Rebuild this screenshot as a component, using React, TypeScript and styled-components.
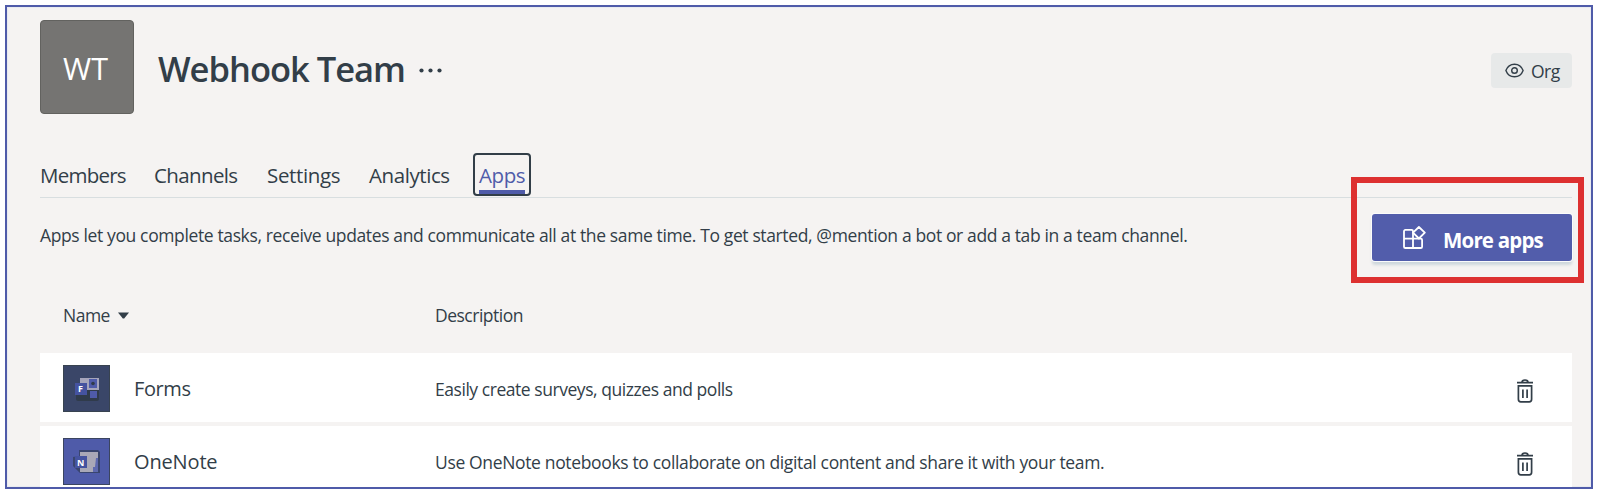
import React from 'react';
import styled, { createGlobalStyle } from 'styled-components';

const ink = '#323e48';
const indigo = '#4f5ba9';

const GlobalStyle = createGlobalStyle`
  * { box-sizing: border-box; }
  body {
    margin: 0;
    background: #fff;
    color: ${ink};
    font-family: 'Open Sans', 'Noto Sans', sans-serif;
  }
  button { font: inherit; color: inherit; border: 0; padding: 0; background: none; }
  svg { display: block; flex: none; }
`;

const Page = styled.div`
  height: 495px;
  padding: 5px 6px 6px 5px;
`;

const Frame = styled.main`
  display: flex;
  flex-direction: column;
  height: 484px;
  overflow: hidden;
  border: 2px solid ${indigo};
  background: #f5f3f2;
  box-shadow: inset 0 0 0 1px #e9ebf0;
  padding: 13px 19px 0 33px;
`;

const Header = styled.header`
  display: flex;
  align-items: flex-start;
  height: 133px;
  flex: none;
`;

const Avatar = styled.div`
  width: 94px;
  height: 94px;
  padding-right: 3px;
  border: 1px solid #62625f;
  border-radius: 4px;
  background: #757472;
  color: #fff;
  font-size: 30.5px;
  line-height: 94px;
  text-align: center;
`;

const Title = styled.h1`
  margin: 27px 0 0 24px;
  font-size: 34.5px;
  font-weight: 600;
  line-height: 44px;
  letter-spacing: -1px;
  white-space: nowrap;
`;

const MoreMenu = styled.button`
  margin: 48px 0 0 14px;
`;

const Visibility = styled.div`
  display: flex;
  align-items: center;
  gap: 7px;
  width: 81px;
  height: 35px;
  margin: 33px 0 0 auto;
  padding-left: 14px;
  border-radius: 4px;
  background: #e7e9e9;
  font-size: 17.5px;
  letter-spacing: -0.5px;
`;

const Tabs = styled.nav`
  display: flex;
  height: 45px;
  flex: none;
  border-bottom: 1px solid #d8dee0;
`;

const Tab = styled.button<{ $span: number; $track: number }>`
  width: ${p => p.$span}px;
  height: 44px;
  text-align: left;
  white-space: nowrap;
  font-size: 20.5px;
  line-height: 42px;
  letter-spacing: ${p => p.$track}px;
`;

const ActiveTab = styled.button`
  width: 58px;
  height: 43px;
  border: 2px solid ${ink};
  border-radius: 4px;
  padding: 0 4px;
  color: ${indigo};
  font-size: 20.5px;
  line-height: 40px;
  letter-spacing: -0.4px;
`;

const ActiveLabel = styled.span`
  display: block;
  height: 39px;
  border-bottom: 4px solid ${indigo};
  white-space: nowrap;
`;

const Intro = styled.section`
  display: flex;
  justify-content: space-between;
  height: 93px;
  flex: none;
`;

const IntroText = styled.p`
  margin: 24px 0 0;
  font-size: 17.5px;
  line-height: 26px;
  letter-spacing: -0.373px;
  white-space: nowrap;
`;

const Callout = styled.div`
  position: relative;
  width: 233px;
  height: 106px;
  margin: -21px -12px 0 0;
  padding: 31px 6px 0 15px;
  border: 6px solid #dd3030;
`;

const PrimaryButton = styled.button`
  display: flex;
  align-items: center;
  width: 200px;
  height: 47px;
  padding-left: 30px;
  gap: 17px;
  border-radius: 3px;
  background: #525dab;
  box-shadow: 0 0 0 1px #fbfbfb, 0 4px 3px #ced7dc;
  color: #fff;
  font-size: 20.5px;
  font-weight: 700;
  line-height: 30px;
  letter-spacing: -0.82px;
  white-space: nowrap;
`;

const ButtonLabel = styled.span`
  padding-top: 4px;
`;

const Columns = styled.div`
  display: grid;
  grid-template-columns: 372px 1fr;
  align-items: center;
  height: 48px;
  flex: none;
  padding-left: 23px;
  font-size: 17.5px;
  line-height: 26px;
  letter-spacing: -0.5px;
`;

const SortHeader = styled.div`
  display: flex;
  align-items: center;
  gap: 8px;
`;

const List = styled.div`
  display: flex;
  flex-direction: column;
  gap: 4px;
  margin-top: 14px;
`;

const Row = styled.div`
  display: grid;
  grid-template-columns: 71px 301px 1fr 16px;
  align-items: start;
  height: 69px;
  flex: none;
  padding: 12px 39px 0 23px;
  background: #fff;
`;

const AppName = styled.div<{ $track: number }>`
  padding-top: 9px;
  font-size: 20px;
  line-height: 30px;
  letter-spacing: ${p => p.$track}px;
`;

const AppText = styled.div<{ $track: number }>`
  padding-top: 11px;
  font-size: 17.5px;
  line-height: 26px;
  letter-spacing: ${p => p.$track}px;
  white-space: nowrap;
`;

const DeleteButton = styled.button`
  padding-top: 14px;
`;

const IconLetter = styled.text`
  font: 700 9px 'Open Sans', sans-serif;
  fill: #fff;
`;

const FormsIcon = () => (
  <svg width="47" height="47" viewBox="0 0 47 47">
    <rect width="47" height="47" fill="#3a4668" />
    <rect x=".5" y=".5" width="46" height="46" fill="none" stroke="#384350" />
    <rect x="13" y="18" width="23" height="18" rx="2" fill="#303b4b" />
    <rect x="17" y="13" width="19" height="12" fill="#a5a5bb" />
    <rect x="26" y="14" width="8" height="9" fill="#4f5ba9" />
    <circle cx="30" cy="18.5" r="1.8" fill="#303b4b" />
    <rect x="27" y="26" width="7" height="7" fill="#4f5ba9" />
    <rect x="12" y="18" width="12" height="12" fill="#4553a0" />
    <IconLetter x="15" y="27">F</IconLetter>
  </svg>
);

const OneNoteIcon = () => (
  <svg width="47" height="47" viewBox="0 0 47 47">
    <rect width="47" height="47" fill="#4f5ba9" />
    <rect x=".5" y=".5" width="46" height="46" fill="none" stroke="#3b4560" />
    <path d="M16 12h19l2 2v21H17l-7-7V19l6-1z" fill="#39456f" />
    <rect x="17" y="14" width="18" height="20" fill="#a9a8b7" />
    <path d="M33 20h2v14h-5v-5h2z" fill="#5e69af" />
    <rect x="12" y="18" width="12" height="12" fill="#4553a0" />
    <IconLetter x="14" y="28">N</IconLetter>
  </svg>
);

const TrashIcon = () => (
  <svg width="16" height="24" viewBox="0 0 16 24" fill="none" stroke={ink} strokeWidth="1.7">
    <path d="M0 3.6h16M5 3.4C5 .2 11 .2 11 3.4" />
    <path d="M1.400 6.800h13.200v13.400c0 1.600-.8 2.600-2.400 2.600H3.800c-1.600 0-2.400-1-2.400-2.600z" />
    <path d="M5.900 10.500v8.500M10.100 10.500v8.500" />
  </svg>
);

const AppsIcon = () => (
  <svg width="24" height="24" viewBox="0 0 24 24" fill="none" stroke="#fff" strokeWidth="1.8" strokeLinejoin="round">
    <path d="M11 12.700V5.200a1.300 1.300 0 0 0-1.300-1.300H3.300A1.300 1.300 0 0 0 2 5.200v15.500A1.300 1.300 0 0 0 3.300 22h15.500a1.300 1.300 0 0 0 1.300-1.300V14a1.300 1.300 0 0 0-1.300-1.300zM2 12.700h9V22" />
    <path d="M16.900 1l5.900 5.700-5.900 5.800L11 6.700z" />
  </svg>
);

const EyeIcon = () => (
  <svg width="19" height="15" viewBox="0 0 19 15" fill="none" stroke={ink} strokeWidth="1.4">
    <path d="M.9 7.5C2.5 3.2 5.8 1.2 9.5 1.2s7 2 8.6 6.3c-1.6 4.3-4.9 6.3-8.6 6.3S2.5 11.8.9 7.5z" />
    <circle cx="9.5" cy="7.5" r="2.8" />
  </svg>
);

const DotsIcon = () => (
  <svg width="24" height="5" viewBox="0 0 24 5" fill={ink}>
    <circle cx="2.5" cy="2.5" r="2.1" />
    <circle cx="11.5" cy="2.5" r="2.1" />
    <circle cx="20.5" cy="2.5" r="2.1" />
  </svg>
);

const CaretIcon = () => (
  <svg width="11" height="7" viewBox="0 0 11 7">
    <path d="M0 .5h11L6.200 6.400H4.800z" fill={ink} />
  </svg>
);

const tabs = [
  { label: 'Members', span: 114, track: -0.75 },
  { label: 'Channels', span: 113, track: -0.62 },
  { label: 'Settings', span: 102, track: -0.35 },
  { label: 'Analytics', span: 104, track: -0.42 },
];

const apps = [
  {
    name: 'Forms',
    nameTrack: -0.4,
    text: 'Easily create surveys, quizzes and polls',
    textTrack: -0.45,
    Icon: FormsIcon,
  },
  {
    name: 'OneNote',
    nameTrack: -0.15,
    text: 'Use OneNote notebooks to collaborate on digital content and share it with your team.',
    textTrack: -0.35,
    Icon: OneNoteIcon,
  },
];

export default function App() {
  return (
    <Page>
      <GlobalStyle />
      <Frame>
        <Header>
          <Avatar>WT</Avatar>
          <Title>Webhook Team</Title>
          <MoreMenu aria-label="More options"><DotsIcon /></MoreMenu>
          <Visibility><EyeIcon />Org</Visibility>
        </Header>
        <Tabs>
          {tabs.map(t => (
            <Tab key={t.label} $span={t.span} $track={t.track}>{t.label}</Tab>
          ))}
          <ActiveTab><ActiveLabel>Apps</ActiveLabel></ActiveTab>
        </Tabs>
        <Intro>
          <IntroText>
            Apps let you complete tasks, receive updates and communicate all at the same time. To get
            started, @mention a bot or add a tab in a team channel.
          </IntroText>
          <Callout>
            <PrimaryButton><AppsIcon /><ButtonLabel>More apps</ButtonLabel></PrimaryButton>
          </Callout>
        </Intro>
        <Columns>
          <SortHeader>Name<CaretIcon /></SortHeader>
          <span>Description</span>
        </Columns>
        <List>
          {apps.map(({ name, nameTrack, text, textTrack, Icon }) => (
            <Row key={name}>
              <Icon />
              <AppName $track={nameTrack}>{name}</AppName>
              <AppText $track={textTrack}>{text}</AppText>
              <DeleteButton aria-label={`Remove ${name}`}><TrashIcon /></DeleteButton>
            </Row>
          ))}
        </List>
      </Frame>
    </Page>
  );
}
